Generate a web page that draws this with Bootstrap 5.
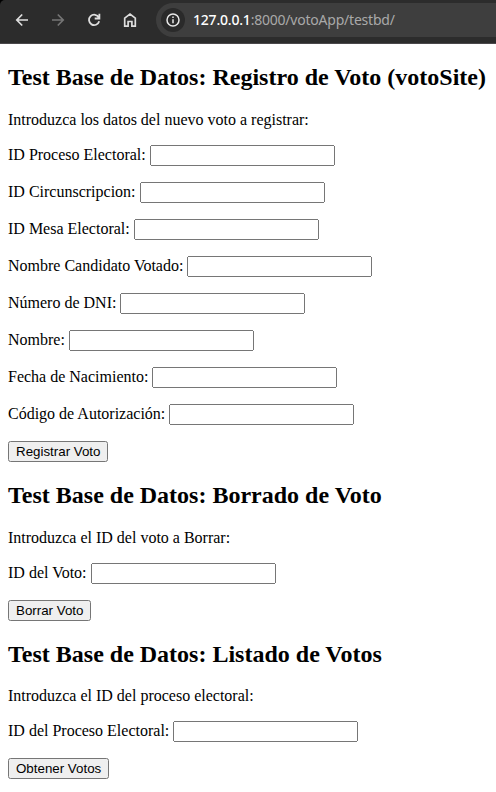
<!DOCTYPE html>
<html lang="es">
<head>
<meta charset="utf-8">
<title>Test Base de Datos</title>
<link rel="stylesheet" href="https://cdn.jsdelivr.net/npm/bootstrap@5.3.0/dist/css/bootstrap.min.css">
<style>
body{font:16px/18px "Liberation Serif",serif;color:#000;background:#fff}
.toolbar{height:44px;background:#2c2c2c;border-bottom:1px solid #4a484b;padding:3px 0 6px 15px;border-top-left-radius:5px}
.corner{background:#000}
.tool{width:14px;height:14px;margin-right:22px;flex:none;overflow:visible}
.omnibox{height:34px;margin-left:-3px;padding-left:5px;background:#3e3e3e;border-radius:17px 0 0 17px}
.site-info{width:24px;height:24px;background:#2a2a2a}
.url{font:14px/20px "Noto Sans",sans-serif;color:#a9a9a9;margin-left:8px;white-space:nowrap}
.url .host{color:#fff;font-weight:500;letter-spacing:-.2px}
.url .path{letter-spacing:-.22px}
.page{padding:19.92px 8px 0}
h2{font-size:24px;line-height:27px;font-weight:700;margin:0 0 19.92px;white-space:nowrap}
.page p{margin:0 0 16px}
.field{height:21px;margin-bottom:16px;gap:4px}
.field label{line-height:18px;padding-bottom:1.2px}
.field input{width:185px;height:21px;padding:1px 2px;font:13.333px "Liberation Sans",sans-serif}
.action{display:block;height:21px;border:1px solid #767676;border-radius:2.5px;background:#efefef;color:#000;padding:0 7px;font:13.333px/19px "Liberation Sans",sans-serif;margin-bottom:19.92px}
</style>
<script src="https://cdn.jsdelivr.net/npm/bootstrap@5.3.0/dist/js/bootstrap.bundle.min.js"></script>
</head>
<body class="overflow-hidden">
<header class="corner">
<nav class="toolbar d-flex align-items-center">
<svg class="tool" viewBox="0 0 14 14" fill="none" stroke="#dedede" stroke-width="1.7"><path d="M13 7H2M7.2 1.5 1.8 7l5.400 5.500"/></svg>
<svg class="tool" viewBox="0 0 14 14" fill="none" stroke="#757575" stroke-width="1.7"><path d="M1 7h11M6.800 1.500 12.200 7l-5.400 5.500"/></svg>
<svg class="tool" viewBox="0 0 14 14" fill="none" stroke="#dedede" stroke-width="1.800"><path d="M11.800 4.500A5.200 5.200 0 1 0 12.200 8.300M12.400 .8v4.700H7.700"/></svg>
<svg class="tool" viewBox="0 0 14 14" fill="none" stroke="#dedede" stroke-width="1.700"><path d="M1.700 5.100 7 1.100l5.300 4v8.100H8.900V8.500H5.100v4.700H1.700z"/></svg>
<div class="omnibox flex-grow-1 d-flex align-items-center">
<span class="site-info rounded-circle d-flex align-items-center justify-content-center flex-shrink-0"><svg width="14" height="14" viewBox="0 0 14 14" fill="none" stroke="#e8e8e8" stroke-width="1.500"><circle cx="7" cy="7" r="6"/><path d="M7 6.200v4M7 3.600v1.500"/></svg></span>
<span class="url"><span class="host">127.0.0.1</span><span class="path">:8000/votoApp/testbd/</span></span>
</div>
</nav>
</header>
<main class="page">
<form>
<h2>Test Base de Datos: Registro de Voto (votoSite)</h2>
<p>Introduzca los datos del nuevo voto a registrar:</p>
<div class="field d-flex align-items-center"><label for="f1">ID Proceso Electoral:</label><input id="f1" type="text"></div>
<div class="field d-flex align-items-center"><label for="f2">ID Circunscripcion:</label><input id="f2" type="text"></div>
<div class="field d-flex align-items-center"><label for="f3">ID Mesa Electoral:</label><input id="f3" type="text"></div>
<div class="field d-flex align-items-center"><label for="f4">Nombre Candidato Votado:</label><input id="f4" type="text"></div>
<div class="field d-flex align-items-center"><label for="f5">Número de DNI:</label><input id="f5" type="text"></div>
<div class="field d-flex align-items-center"><label for="f6">Nombre:</label><input id="f6" type="text"></div>
<div class="field d-flex align-items-center"><label for="f7">Fecha de Nacimiento:</label><input id="f7" type="text"></div>
<div class="field d-flex align-items-center"><label for="f8">Código de Autorización:</label><input id="f8" type="text"></div>
<button class="action" type="button">Registrar Voto</button>
</form>
<form>
<h2>Test Base de Datos: Borrado de Voto</h2>
<p>Introduzca el ID del voto a Borrar:</p>
<div class="field d-flex align-items-center"><label for="f9">ID del Voto:</label><input id="f9" type="text"></div>
<button class="action" type="button">Borrar Voto</button>
</form>
<form>
<h2>Test Base de Datos: Listado de Votos</h2>
<p>Introduzca el ID del proceso electoral:</p>
<div class="field d-flex align-items-center"><label for="f10">ID del Proceso Electoral:</label><input id="f10" type="text"></div>
<button class="action" type="button">Obtener Votos</button>
</form>
</main>
</body>
</html>
